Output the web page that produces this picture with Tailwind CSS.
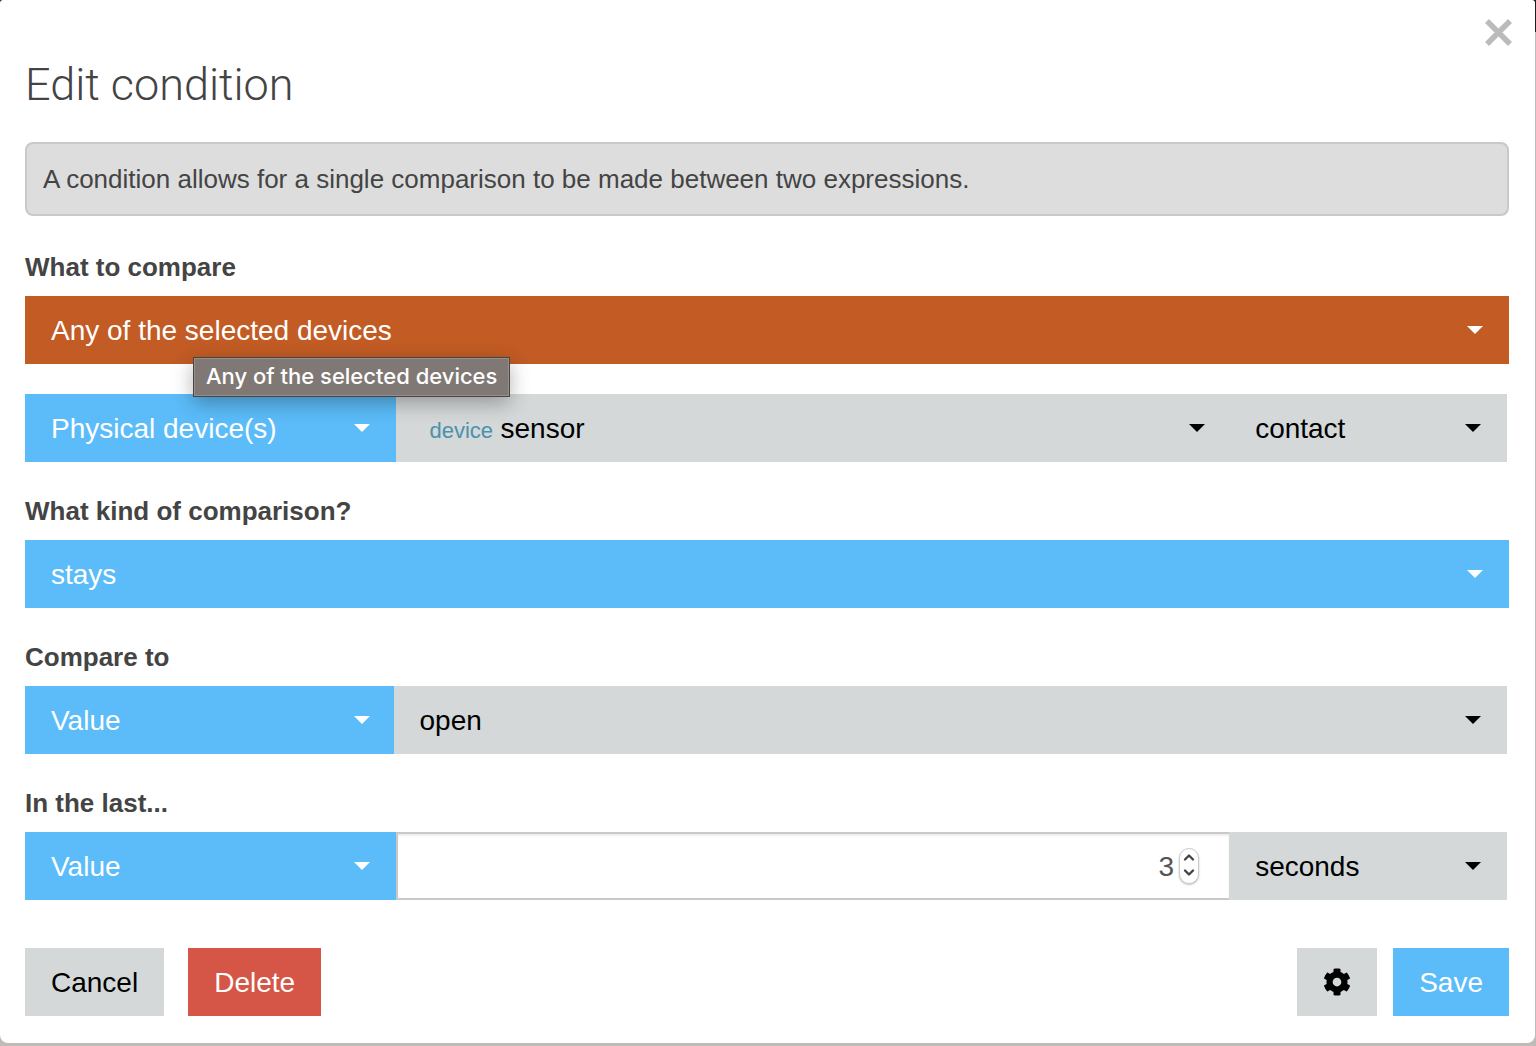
<!DOCTYPE html>
<html lang="en">
	<head>
		<meta charset="utf-8" />
		<meta name="viewport" content="width=device-width, initial-scale=1" />
		<title>Edit condition</title>
		<script src="https://cdn.jsdelivr.net/npm/@tailwindcss/browser@4"></script>
	</head>
	<body class="relative min-h-screen bg-[#bfbbb5] font-['Liberation_Sans',Arial,sans-serif] text-[#444]">
		<svg class="hidden">
			<symbol id="caret" viewBox="0 0 16 8"><path d="M0 0h16L8 8z" fill="currentColor" /></symbol>
		</svg>

		<!-- page header behind the dialog -->
		<div class="absolute inset-x-0 top-0 h-8 bg-[#1c1c1c]"></div>

		<form role="dialog" aria-labelledby="title" class="relative mr-px rounded-t-[3px] rounded-b-lg bg-white pt-14 pr-[26px] pb-[27px] pl-[25px]">
			<button type="button" aria-label="Close" class="absolute top-[19px] right-[23px] text-[#bbb]">
				<svg class="size-[27px]" viewBox="0 0 27 27" fill="none" stroke="currentColor" stroke-width="5.6"><path d="M2 2l23 23M25 2L2 25" /></svg>
			</button>

			<h1 id="title" class="font-['Roboto','Liberation_Sans',sans-serif] text-[45px] leading-[58px] font-light">Edit condition</h1>
			<p class="mt-7 mb-[2px] rounded-lg border-2 border-[#c9c9c9] bg-[#ddd] px-4 py-[17px] text-[26px] leading-9">A condition allows for a single comparison to be made between two expressions.</p>

			<div class="pt-[30px]">
				<label for="group" class="block pb-[10px] text-[26px] leading-[38px] font-bold">What to compare</label>
				<div class="relative grid items-center bg-[#c25b24] text-white">
					<select id="group" class="col-start-1 row-start-1 h-[68px] w-full appearance-none px-[26px] pt-0.5 text-[28px]"><option>Any of the selected devices</option></select>
					<svg class="pointer-events-none col-start-1 row-start-1 mr-[26px] h-2 w-4 justify-self-end"><use href="#caret" /></svg>
					<div role="tooltip" class="absolute top-[61px] left-[168px] z-10 border border-[#4a4340] bg-[#807875] px-3 pb-0.5 font-['Inter',sans-serif] text-[22px] leading-9 font-medium whitespace-nowrap text-white shadow-[inset_0_0_0_1px_#968f8c,0_6px_20px_rgba(0,0,0,0.3)]">Any of the selected devices</div>
				</div>
				<div class="mt-[30px] mr-[2px] flex">
					<div class="grid w-1/4 items-center bg-[#5bbcf9] text-white">
						<select aria-label="Operand type" class="col-start-1 row-start-1 h-[68px] w-full appearance-none px-[26px] pt-0.5 text-[28px]"><option>Physical device(s)</option></select>
						<svg class="pointer-events-none col-start-1 row-start-1 mr-[26px] h-2 w-4 justify-self-end"><use href="#caret" /></svg>
					</div>
					<div class="grid w-9/16 items-center bg-[#d4d8d9] text-black">
						<label for="device" class="col-start-1 row-start-1 pt-1 pl-[34px] text-[22px] text-[#4b91ad]">device</label>
						<select id="device" class="col-start-1 row-start-1 h-[68px] w-full appearance-none pt-0.5 pr-[26px] pl-[105px] text-[28px]"><option>sensor</option></select>
						<svg class="pointer-events-none col-start-1 row-start-1 mr-6 h-2 w-4 justify-self-end"><use href="#caret" /></svg>
					</div>
					<div class="grid w-3/16 items-center bg-[#d4d8d9] text-black">
						<select aria-label="Attribute" class="col-start-1 row-start-1 h-[68px] w-full appearance-none px-[26px] pt-0.5 text-[28px]"><option>contact</option></select>
						<svg class="pointer-events-none col-start-1 row-start-1 mr-[26px] h-2 w-4 justify-self-end"><use href="#caret" /></svg>
					</div>
				</div>
			</div>

			<div class="pt-[30px]">
				<label for="comparison" class="block pb-[10px] text-[26px] leading-[38px] font-bold">What kind of comparison?</label>
				<div class="grid items-center bg-[#5bbcf9] text-white">
					<select id="comparison" class="col-start-1 row-start-1 h-[68px] w-full appearance-none px-[26px] pt-0.5 text-[28px]"><option>stays</option></select>
					<svg class="pointer-events-none col-start-1 row-start-1 mr-[26px] h-2 w-4 justify-self-end"><use href="#caret" /></svg>
				</div>
			</div>

			<div class="pt-[30px]">
				<label for="compare-to" class="block pb-[10px] text-[26px] leading-[38px] font-bold">Compare to</label>
				<div class="mr-[2px] flex">
					<div class="grid w-1/4 items-center bg-[#5bbcf9] text-white">
						<select id="compare-to" class="col-start-1 row-start-1 h-[68px] w-full appearance-none px-[26px] pt-0.5 text-[28px]"><option>Value</option></select>
						<svg class="pointer-events-none col-start-1 row-start-1 mr-[26px] h-2 w-4 justify-self-end"><use href="#caret" /></svg>
					</div>
					<div class="z-0 -ml-[2px] grid flex-1 items-center bg-[#d4d8d9] text-black">
						<select aria-label="Value to compare to" class="col-start-1 row-start-1 h-[68px] w-full appearance-none px-[26px] pt-0.5 text-[28px]"><option>open</option></select>
						<svg class="pointer-events-none col-start-1 row-start-1 mr-[26px] h-2 w-4 justify-self-end"><use href="#caret" /></svg>
					</div>
				</div>
			</div>

			<div class="pt-[30px]">
				<label for="duration-type" class="block pb-[10px] text-[26px] leading-[38px] font-bold">In the last...</label>
				<div class="mr-[2px] flex">
					<div class="grid w-1/4 items-center bg-[#5bbcf9] text-white">
						<select id="duration-type" class="col-start-1 row-start-1 h-[68px] w-full appearance-none px-[26px] pt-0.5 text-[28px]"><option>Value</option></select>
						<svg class="pointer-events-none col-start-1 row-start-1 mr-[26px] h-2 w-4 justify-self-end"><use href="#caret" /></svg>
					</div>
					<div class="grid w-9/16 items-center">
						<input type="number" aria-label="Duration" value="3" class="col-start-1 row-start-1 h-[68px] w-full border-y-2 border-l-2 border-[#c9c9c9] bg-white pt-0.5 pr-[55px] text-right text-[28px] text-[#555] shadow-[inset_0_2px_2px_rgba(0,0,0,0.07)] [&::-webkit-inner-spin-button]:appearance-none" />
						<svg class="pointer-events-none col-start-1 row-start-1 mr-[30px] h-9 w-5 justify-self-end rounded-full border border-[#ccc] bg-white shadow-[0_1px_2px_rgba(0,0,0,0.25)]" viewBox="0 0 18 34" fill="none" stroke="#444" stroke-width="2.4" stroke-linecap="round" stroke-linejoin="round"><path d="M5 10.5l4-4 4 4M5 21.5l4 4 4-4" /></svg>
					</div>
					<div class="grid w-3/16 items-center bg-[#d4d8d9] text-black">
						<select aria-label="Duration unit" class="col-start-1 row-start-1 h-[68px] w-full appearance-none px-[26px] pt-0.5 text-[28px]"><option>seconds</option></select>
						<svg class="pointer-events-none col-start-1 row-start-1 mr-[26px] h-2 w-4 justify-self-end"><use href="#caret" /></svg>
					</div>
				</div>
			</div>

			<div class="mt-12 flex h-[68px] text-[28px]">
				<button type="button" class="bg-[#d4d8d9] px-[26px] pt-0.5 text-black">Cancel</button>
				<button type="button" class="ml-6 bg-[#d55646] px-[26px] pt-0.5 text-white">Delete</button>
				<button type="button" aria-label="Settings" class="mr-4 ml-auto bg-[#d4d8d9] px-[26px] text-black">
					<svg class="size-7" viewBox="0 0 512 512" fill="currentColor"><path d="M487.4 315.7l-42.6-24.6c4.3-23.2 4.3-47 0-70.2l42.6-24.6c4.9-2.8 7.1-8.6 5.5-14-11.1-35.6-30-67.8-54.7-94.6-3.8-4.1-10-5.1-14.8-2.3L380.8 110c-17.9-15.4-38.5-27.3-60.8-35.1V25.8c0-5.6-3.9-10.5-9.4-11.7-36.7-8.2-74.3-7.8-109.2 0-5.5 1.2-9.4 6.1-9.4 11.7V75c-22.2 7.9-42.8 19.8-60.8 35.1L88.7 85.5c-4.9-2.8-11-1.9-14.8 2.3-24.7 26.7-43.6 58.9-54.7 94.6-1.7 5.4.6 11.2 5.5 14L67.3 221c-4.3 23.2-4.3 47 0 70.2l-42.6 24.6c-4.9 2.8-7.1 8.6-5.5 14 11.1 35.6 30 67.8 54.7 94.6 3.8 4.1 10 5.1 14.8 2.3l42.6-24.6c17.9 15.4 38.5 27.3 60.8 35.1v49.2c0 5.6 3.9 10.5 9.4 11.7 36.7 8.2 74.3 7.8 109.2 0 5.5-1.2 9.4-6.1 9.4-11.7v-49.2c22.2-7.9 42.8-19.8 60.8-35.1l42.6 24.6c4.9 2.8 11 1.9 14.8-2.3 24.7-26.7 43.6-58.9 54.7-94.6 1.5-5.5-.7-11.3-5.6-14.1zM256 336c-44.1 0-80-35.9-80-80s35.9-80 80-80 80 35.9 80 80-35.9 80-80 80z" /></svg>
				</button>
				<button type="submit" class="bg-[#5bbcf9] px-[26px] pt-0.5 text-white">Save</button>
			</div>
		</form>
	</body>
</html>
